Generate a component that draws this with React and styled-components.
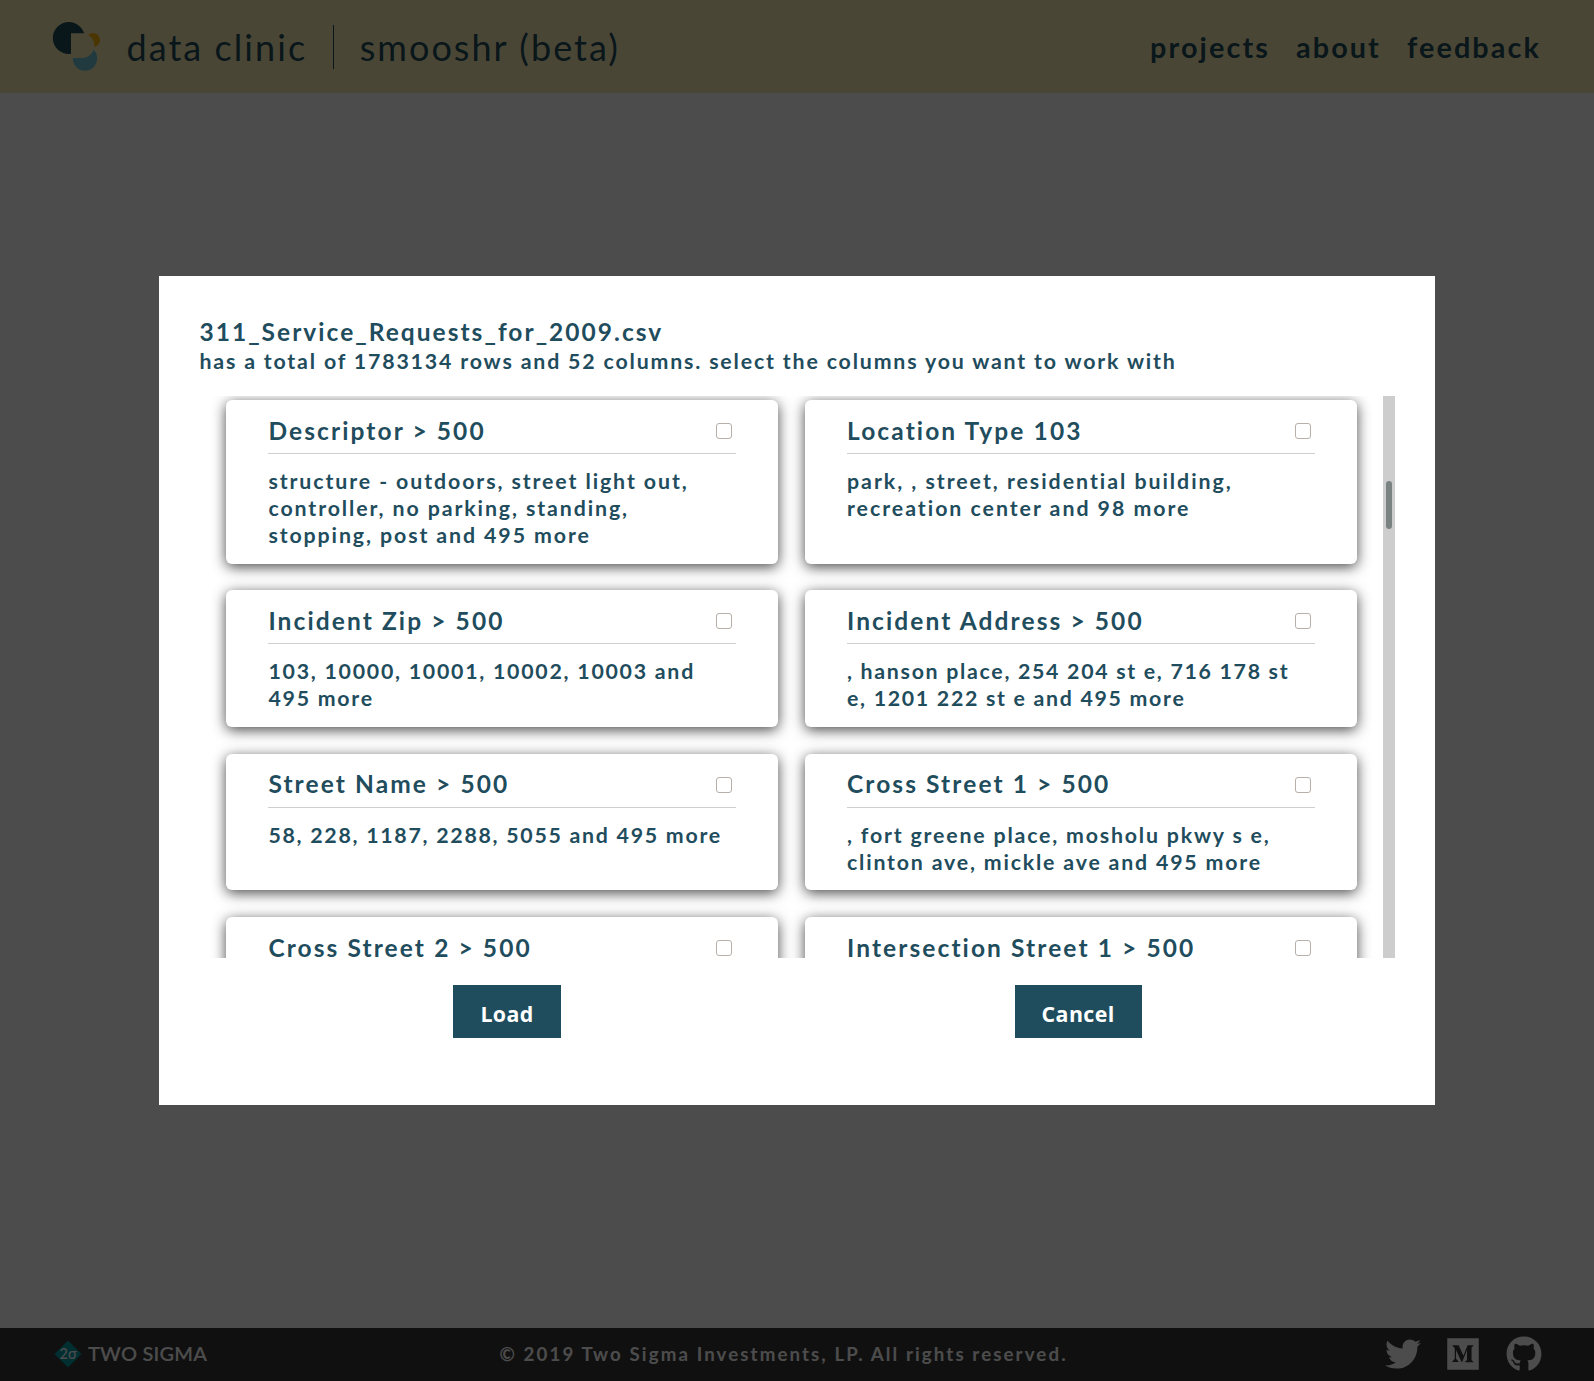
import React from "react";
import styled, { createGlobalStyle } from "styled-components";
import { FaTwitter, FaMedium, FaGithub } from "react-icons/fa";

const GlobalStyle = createGlobalStyle`
  * { box-sizing: border-box; }
  html, body { margin: 0; padding: 0; }
  body {
    font-family: Lato, "Open Sans", sans-serif;
    letter-spacing: 2.1px;
    color: #1f4d5d;
    background: #fff;
  }
`;

const Page = styled.div`
  display: flex;
  flex-direction: column;
  height: 100vh;
  overflow: hidden;
`;

const Header = styled.header`
  flex: none;
  height: 93px;
  padding: 0 53px 0 52px;
  display: flex;
  align-items: center;
  justify-content: space-between;
  background: #f8ecb3;
`;

const Brand = styled.div`
  display: flex;
  align-items: center;
  font-size: 36px;
  line-height: 44px;
  letter-spacing: 2.05px;
`;

const Logo = styled.svg`
  width: 48px;
  height: 50px;
  margin: 0 26.5px 2px 0;
`;

const BrandName = styled.span`
  padding-right: 25.5px;
  border-right: 1px solid #1f4d5d;
  margin-right: 26px;
`;

const Nav = styled.nav`
  display: flex;
  gap: 26px;
`;

const NavLink = styled.a`
  font-size: 28.8px;
  font-weight: 700;
`;

const Main = styled.main`
  flex: 1;
`;

const Footer = styled.footer`
  flex: none;
  height: 53px;
  padding: 0 52px 2px 54px;
  display: flex;
  align-items: center;
  justify-content: space-between;
  background: #363636;
  color: #fff;
`;

const Sponsor = styled.div`
  display: flex;
  align-items: center;
  gap: 6px;
  font-size: 20px;
  line-height: 24px;
  font-weight: 600;
  letter-spacing: 0.2px;
`;

const SponsorName = styled.span`
  padding-bottom: 2px;
`;

const Copyright = styled.div`
  margin-right: 25px;
  font-size: 18.7px;
  font-weight: 700;
`;

const Social = styled.div`
  display: flex;
  align-items: center;
  gap: 25px;

  svg:first-child {
    margin-right: -1px;
  }
`;

const Overlay = styled.div`
  position: fixed;
  inset: 0;
  display: flex;
  align-items: center;
  justify-content: center;
  background: rgba(0, 0, 0, 0.7);
`;

const Modal = styled.section`
  width: 80%;
  height: 60%;
  padding: 40px;
  display: flex;
  flex-direction: column;
  background: #fff;
`;

const FileName = styled.h2`
  margin: 0;
  font-size: 24.5px;
  line-height: 32px;
  font-weight: 700;
  letter-spacing: 2.03px;
`;

const Summary = styled.p`
  margin: 0 0 20.8px;
  font-size: 21.33px;
  line-height: 27px;
  font-weight: 700;
  letter-spacing: 1.83px;
`;

const ListFrame = styled.div`
  height: 562px;
  flex: none;
  display: flex;
`;

const CardGrid = styled.div`
  flex: 1;
  height: 100%;
  overflow: hidden;
  padding: 4px 26px 0 27px;
  display: grid;
  grid-template-columns: 1fr 1fr;
  grid-template-rows: 163.7px 136.7px 136.7px 136.7px;
  gap: 26.6px 27px;
`;

const Track = styled.div`
  width: 12px;
  padding: 85px 3px 0;
  background: #cdcdcd;
`;

const Thumb = styled.div`
  height: 48px;
  border-radius: 3px;
  background: #7b8282;
`;

const CardBox = styled.article`
  padding: 14px 42px;
  border-radius: 6px;
  background: #fff;
  box-shadow: 0 3px 14px rgba(0, 0, 0, 0.72);
`;

const CardHeader = styled.div`
  height: 40px;
  padding: 0 4px 5px 0;
  display: flex;
  justify-content: space-between;
  align-items: center;
  border-bottom: 1px solid #cfcfcf;
`;

const CardTitle = styled.h3`
  margin: 0 0 0.3px;
  font-size: 24.5px;
  line-height: 30px;
  font-weight: 700;
  letter-spacing: 2.1px;
`;

const Check = styled.input`
  appearance: none;
  width: 16px;
  height: 16px;
  margin: 0;
  border: 1px solid #b8b0a8;
  border-radius: 3px;
  background: #fff;
`;

const CardText = styled.p`
  margin: 14.2px 0 0;
  font-size: 21.33px;
  line-height: 27px;
  font-weight: 700;
  letter-spacing: ${(p) => p.$tracking}px;
`;

const Actions = styled.div`
  margin-top: 27px;
  padding: 0 26px 0 27px;
  display: flex;
  justify-content: space-around;
`;

const Button = styled.button`
  height: 53px;
  padding: 3px 27px 0;
  border: 0;
  background: #1f4d5d;
  color: #fff;
  font: 700 21.33px "Open Sans", sans-serif;
  letter-spacing: 0.4px;
`;

const columns = [
  { title: "Descriptor > 500", tracking: 1.9, text: "structure - outdoors, street light out, controller, no parking, standing, stopping, post and 495 more" },
  { title: "Location Type 103", tracking: 1.97, text: "park, , street, residential building, recreation center and 98 more" },
  { title: "Incident Zip > 500", tracking: 1.75, text: "103, 10000, 10001, 10002, 10003 and 495 more" },
  { title: "Incident Address > 500", tracking: 1.7, text: ", hanson place, 254 204 st e, 716 178 st e, 1201 222 st e and 495 more" },
  { title: "Street Name > 500", tracking: 1.73, text: "58, 228, 1187, 2288, 5055 and 495 more" },
  { title: "Cross Street 1 > 500", tracking: 1.81, text: ", fort greene place, mosholu pkwy s e, clinton ave, mickle ave and 495 more" },
  { title: "Cross Street 2 > 500" },
  { title: "Intersection Street 1 > 500" },
];

function Card({ title, text, tracking }) {
  return (
    <CardBox>
      <CardHeader>
        <CardTitle>{title}</CardTitle>
        <Check type="checkbox" />
      </CardHeader>
      {text && <CardText $tracking={tracking}>{text}</CardText>}
    </CardBox>
  );
}

export default function App() {
  return (
    <>
      <GlobalStyle />
      <Page>
        <Header>
          <Brand>
            <Logo viewBox="52 21 48 50">
              <circle cx="68.8" cy="38" r="16" fill="#1f4d5d" />
              <circle cx="93" cy="40" r="7" fill="#ffb400" />
              <circle cx="85" cy="58.5" r="12.2" fill="#70c4d8" />
              <path d="M71 33.3H83A12.4 12.4 0 0 1 83 58H71Z" fill="#f8ecb3" />
            </Logo>
            <BrandName>data clinic</BrandName>
            <span>smooshr (beta)</span>
          </Brand>
          <Nav>
            <NavLink>projects</NavLink>
            <NavLink>about</NavLink>
            <NavLink>feedback</NavLink>
          </Nav>
        </Header>
        <Main />
        <Footer>
          <Sponsor>
            <svg width="28" height="28" viewBox="0 0 28 28">
              <path d="M14 0.5L27.5 14L14 27.5L0.5 14Z" fill="#009ba5" />
              <text x="5.4" y="18.6" fontSize="14.5" fontWeight="500" fontFamily="Lato" fill="#fff">
                2σ
              </text>
            </svg>
            <SponsorName>TWO SIGMA</SponsorName>
          </Sponsor>
          <Copyright>© 2019 Two Sigma Investments, LP. All rights reserved.</Copyright>
          <Social>
            <FaTwitter size={36} />
            <FaMedium size={36} />
            <FaGithub size={36} />
          </Social>
        </Footer>
      </Page>
      <Overlay>
        <Modal>
          <FileName>311_Service_Requests_for_2009.csv</FileName>
          <Summary>has a total of 1783134 rows and 52 columns. select the columns you want to work with</Summary>
          <ListFrame>
            <CardGrid>
              {columns.map((column) => (
                <Card key={column.title} {...column} />
              ))}
            </CardGrid>
            <Track>
              <Thumb />
            </Track>
          </ListFrame>
          <Actions>
            <Button>Load</Button>
            <Button>Cancel</Button>
          </Actions>
        </Modal>
      </Overlay>
    </>
  );
}
